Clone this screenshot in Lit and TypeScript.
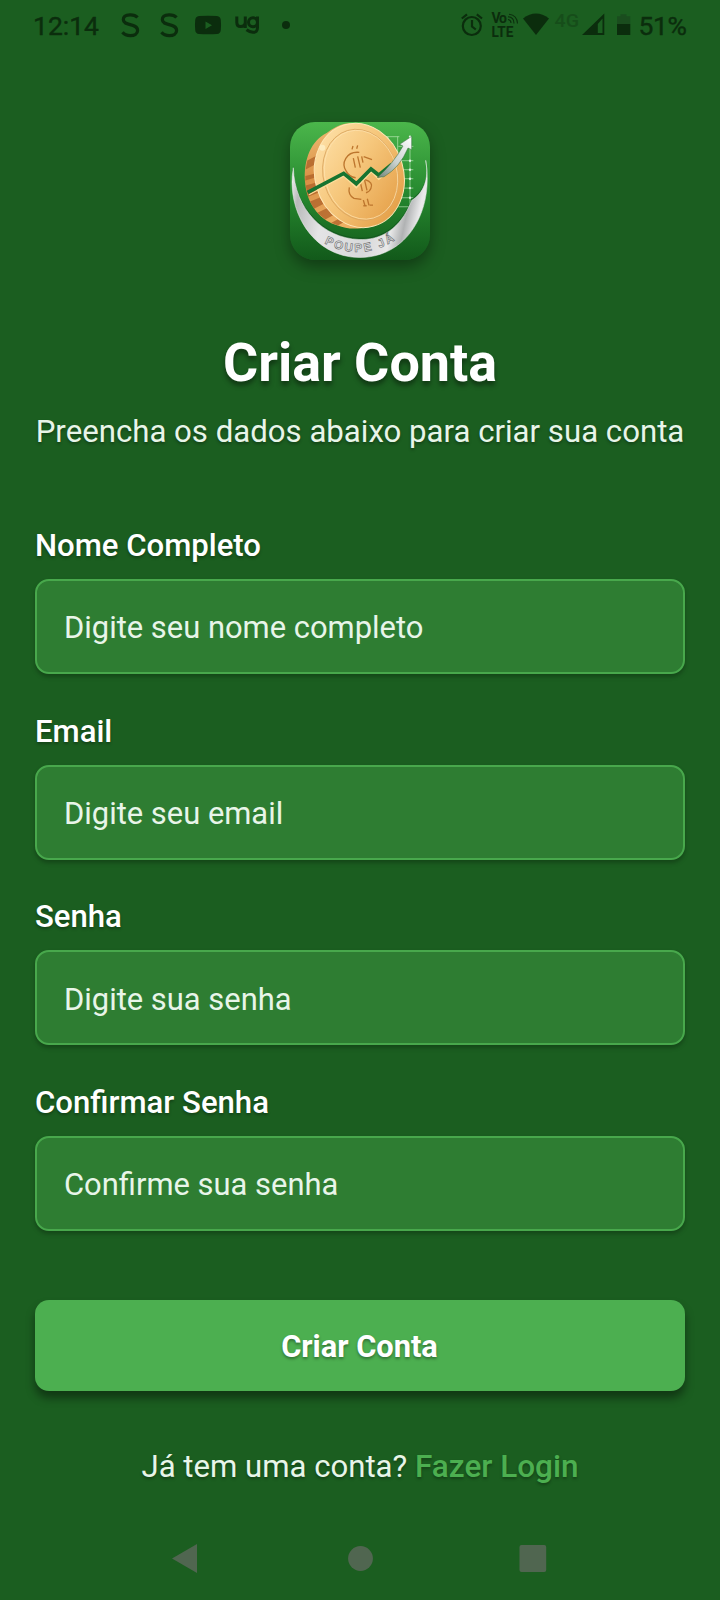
import { LitElement, html, css, svg } from "lit";
import { customElement } from "lit/decorators.js";

@customElement("status-bar")
class StatusBar extends LitElement {
  static styles = css`
    :host { display: block; height: 50px; }
    svg { display: block; }
    text { font-family: Roboto, sans-serif; fill: #0b2d0d; }
    .clock { font-size: 26.5px; stroke: #0b2d0d; stroke-width: 0.4px; }
    .volte { font-weight: 700; font-size: 14px; }
    .net { font-weight: 500; font-size: 18px; fill: #164d1a; }
  `;
  render() {
    return html`<svg width="720" height="50" viewBox="0 0 720 50" fill="#0b2d0d">
      <text class="clock" x="33" y="34.7" textLength="66">12:14</text>
      <g fill="none" stroke="#0b2d0d" stroke-width="3.2">
        <path d="M137.500 17.500C135.500 15.300 133 14.700 130 14.800C125.800 14.900 123.300 16.800 123.300 19.600C123.300 26.500 137.600 22.800 137.600 30.500C137.600 34 134.400 35.700 130.400 35.700C127 35.700 124.300 34.600 122.500 32.300"/>
        <path d="M176.500 17.500C174.500 15.300 172 14.700 169 14.800C164.800 14.900 162.300 16.800 162.300 19.600C162.300 26.500 176.600 22.800 176.600 30.500C176.600 34 173.400 35.700 169.400 35.700C166 35.700 163.300 34.600 161.500 32.300"/>
      </g>
      <path fill-rule="evenodd" d="M199 16Q208 15.300 217 16Q220.500 16.400 220.800 20Q221.300 25 220.800 30Q220.500 33.700 217 34Q208 34.700 199 34Q195.500 33.700 195.200 30Q194.700 25 195.200 20Q195.500 16.400 199 16ZM205.500 21.500V29L212 25.200Z"/>
      <g fill="none" stroke="#0b2d0d" stroke-width="3">
        <path d="M236.800 16.500V22.500Q236.800 26.500 240.600 26.500Q245.300 26.500 245.300 22V16.500V28"/>
        <circle cx="253" cy="22.300" r="4.500"/>
        <path d="M257.500 16.500V27.500Q257.500 32.500 253 32.300Q249.500 32 246.500 29.800"/>
      </g>
      <circle cx="286" cy="25" r="4"/>
      <g fill="none" stroke="#0b2d0d" stroke-width="2.200">
        <circle cx="471.800" cy="26" r="9"/>
        <path d="M472 20V26.500L475.800 29.500M461.800 18.500L467 14.400M482 18.500L476.800 14.400"/>
      </g>
      <text class="volte" x="491.500" y="22.500" textLength="15.500">Vo</text>
      <text class="volte" x="491.500" y="36.700" textLength="22" lengthAdjust="spacingAndGlyphs">LTE</text>
      <path fill="none" stroke="#0b2d0d" stroke-width="1.100" d="M508 19.500Q511 20 511 23M508 16.800Q514 17 514 23.500M509 14.200Q517 15 517.500 23.500"/>
      <path d="M523 18.500Q536 8.500 549 18.500L536 35Z"/>
      <text class="net" x="554.500" y="26.500" textLength="24.500" lengthAdjust="spacingAndGlyphs">4G</text>
      <path fill-rule="evenodd" d="M582 35L604.300 13.500V35ZM597.800 24V33H602.500V18.500Z"/>
      <path d="M617 17V16.300H620.500V14.300H626.500V16.300H630.300V24H617Z" fill="#1a4d1e"/>
      <path d="M617 24H630.300V35H617Z"/>
      <text class="clock" x="638.500" y="34.700" textLength="48.500">51%</text>
    </svg>`;
  }
}

@customElement("app-logo")
class AppLogo extends LitElement {
  static styles = css`
    :host { display: block; width: 140px; height: 138.500px; border-radius: 25px; overflow: hidden;
      box-shadow: 0 7px 15px rgba(0, 0, 0, 0.36); }
    svg { display: block; }
    text { font-family: "Liberation Sans", sans-serif; font-weight: 700; font-size: 35px; letter-spacing: 6.500px; }
  `;
  render() {
    const gridX = [354, 383, 420];
    const gridY = [94, 123, 166, 193, 220, 248, 277, 304];
    return html`<svg width="140" height="138.500" viewBox="60 50 420 415" preserveAspectRatio="none">
      <defs>
        <linearGradient id="bg" x1="0" y1="0" x2="0" y2="1"><stop offset="0" stop-color="#4bb64b"/><stop offset=".5" stop-color="#278a30"/><stop offset="1" stop-color="#12591a"/></linearGradient>
        <linearGradient id="face" x1=".1" y1="0" x2=".85" y2="1"><stop offset="0" stop-color="#ffe3ac"/><stop offset=".45" stop-color="#f6c77c"/><stop offset="1" stop-color="#e39b42"/></linearGradient>
        <linearGradient id="edge" x1="0" y1="0" x2=".3" y2="1"><stop offset="0" stop-color="#f2c27a"/><stop offset=".5" stop-color="#d98f45"/><stop offset="1" stop-color="#eeb063"/></linearGradient>
        <linearGradient id="silver" x1="0" y1="0" x2="1" y2=".15"><stop offset="0" stop-color="#fff"/><stop offset=".1" stop-color="#b9babb"/><stop offset=".3" stop-color="#e4e4e5"/><stop offset=".65" stop-color="#d8d9da"/><stop offset=".82" stop-color="#e8e8e8"/><stop offset=".91" stop-color="#b0b2b3"/><stop offset="1" stop-color="#e9e9ea"/></linearGradient>
        <linearGradient id="arrow" x1="0" y1="1" x2="1" y2="0"><stop offset="0" stop-color="#6f8378"/><stop offset=".45" stop-color="#c9d1ce"/><stop offset="1" stop-color="#fff"/></linearGradient>
        <path id="arc" d="M163 413Q280 477 402 386"/>
      </defs>
      <rect x="60" y="50" width="420" height="415" fill="url(#bg)"/>
      <g stroke="#d2f3cc" stroke-width="2" opacity=".85">
        ${gridX.map(x => svg`<path d="M${x} 94V${x === 420 ? 304 : 150}"/>`)}
        ${gridY.map(y => svg`<path d="M${y < 110 ? 348 : 385} ${y}H${y < 110 ? 388 : 430}"/><circle cx="420" cy=${y} r="3.500" fill="#fff" stroke="none"/>`)}
      </g>
      <path d="M239 54C210 54 190 70 170 83C125 105 100 160 105 230C111 304 157 348 203 360Q234 373 274 368L360 318Z" fill="url(#edge)"/>
      <path d="M112 165L142 150L138 176L107 192ZM106 212L136 204V216L106 225ZM107 240L136 232L144 262L114 274ZM120 288L150 276L160 296L132 310ZM142 322L172 308L196 326L166 342ZM184 352L214 336L230 345L204 360Z" fill="#b0642a" opacity=".8"/>
      <ellipse cx="268" cy="210" rx="133" ry="158" transform="rotate(-16 268 210)" fill="url(#face)" stroke="#ffe7b6" stroke-width="3"/>
      <ellipse cx="271" cy="208" rx="111" ry="138" transform="rotate(-16 271 208)" fill="none" stroke="#dba660" stroke-width="2.500"/>
      <ellipse cx="273" cy="208" rx="108" ry="135" transform="rotate(-16 273 208)" fill="none" stroke="#ffe3b0" stroke-width="2"/>
      <g fill="none" stroke="#bd762e" stroke-width="4">
        <path d="M268 141C229 137 212 174 229 198Q237 214 257 217M281 154L306 163M238 246Q233 268 252 279L274 282M285 223Q311 231 303 248Q300 258 288 262"/>
        <path d="M246 132L249 122M260 130L263 120M250 158L256 187M263 153L271 187M275 153L279 172M270 226L277 257M283 221L291 255M280 284L285 301M292 280L297 300M280 301L290 301M299 299L309 299"/>
      </g>
      <path d="M117 260L221 204L259 239L304 191L326 214L365 184" fill="none" stroke="#fbdc9a" stroke-width="4" transform="translate(0 8)"/>
      <path d="M113 261L221 204L259 235L303 191L326 209L365 177" fill="none" stroke="#167430" stroke-width="11"/>
      <path d="M322 216Q371 173 399 122L389 117L425 93V133L414 128Q390 186 342 214Z" fill="url(#arrow)" stroke="#306c3b" stroke-width="1.500"/>
      <path d="M70 187C47 310 125 456 269 456C410 456 493 318 467 165C478 220 461 263 425 285C391 374 328 405 267 402C160 398 74 312 70 187Z" fill="#0b461a" opacity=".5" transform="translate(0 -5)"/>
      <path d="M70 187C47 310 125 456 269 456C410 456 493 318 467 165C478 220 461 263 425 285C391 374 328 405 267 402C160 398 74 312 70 187Z" fill="url(#silver)" stroke="#f2f2f2" stroke-width="1.500"/>
      <text fill="#e7e7e8" stroke="#6c6e6f" stroke-width="1.800"><textPath href="#arc">POUPE JÁ</textPath></text>
      <circle cx="157" cy="127" r="9" fill="#fff4cf" opacity=".65"/>
    </svg>`;
  }
}

@customElement("app-root")
class AppRoot extends LitElement {
  static styles = css`
    :host { display: flex; flex-direction: column; box-sizing: border-box; width: 720px; height: 1600px; overflow: hidden;
      background: #1b5e20; color: #fff; font-family: Roboto, sans-serif; font-size: 30.700px; }
    .content { display: flex; flex-direction: column; padding: 71.500px 35px 0; }
    app-logo { align-self: center; }
    h1 { margin: 71px 0 0; font-size: 53.900px; line-height: 64px; font-weight: 700; text-align: center; white-space: nowrap;
      text-shadow: 0 3.500px 5px rgba(0, 0, 0, 0.42); }
    .sub { margin: 19px -10px 0; line-height: 36px; text-align: center; white-space: nowrap; color: #e8f5e9; font-size: 31.180px;
      text-shadow: 0 2px 3px rgba(0, 0, 0, 0.3); }
    .form { display: flex; flex-direction: column; gap: 39.400px; margin-top: 78px; }
    .field { display: flex; flex-direction: column; gap: 15px; height: 146.200px; box-sizing: border-box; }
    .label { line-height: 36px; flex: none; font-weight: 500; text-shadow: 0 2px 3px rgba(0, 0, 0, 0.3); height: 36px; font-size: 31.120px; }
    .input { flex: 1; display: flex; align-items: center; box-sizing: border-box; border: 2px solid #48a84c;
      border-radius: 14px; background: #2e7d32; padding: 2.500px 27px 0; color: #e8f5e9; font-size: 30.920px;
      box-shadow: 0 3px 4px rgba(0, 0, 0, 0.26); }
    .button { display: flex; align-items: center; justify-content: center; height: 91px; margin-top: 68.800px;
      border-radius: 14px; background: #4caf50; font-weight: 700; padding: 2px 1px 0 0; box-sizing: border-box; font-size: 30.800px;
      box-shadow: 0 7px 10px rgba(0, 0, 0, 0.42); text-shadow: 0 2px 3px rgba(0, 0, 0, 0.35); }
    .login { margin-top: 58px; line-height: 36px; text-align: center; white-space: nowrap; color: #e8f5e9; font-size: 31.150px;
      text-shadow: 0 2px 3px rgba(0, 0, 0, 0.3); }
    .link { font-weight: 500; font-size: 31.500px; color: #4caf50; }
    .nav { margin-top: auto; height: 84px; flex: none; }
    .nav svg { display: block; }
  `;
  fields = [
    ["Nome Completo", "Digite seu nome completo"],
    ["Email", "Digite seu email"],
    ["Senha", "Digite sua senha"],
    ["Confirmar Senha", "Confirme sua senha"],
  ];
  render() {
    return html`
      <status-bar></status-bar>
      <div class="content">
        <app-logo></app-logo>
        <h1>Criar Conta</h1>
        <p class="sub">Preencha os dados abaixo para criar sua conta</p>
        <div class="form">
          ${this.fields.map(([label, hint]) => html`<div class="field"><div class="label">${label}</div><div class="input">${hint}</div></div>`)}
        </div>
        <div class="button">Criar Conta</div>
        <div class="login">Já tem uma conta? <span class="link">Fazer Login</span></div>
      </div>
      <div class="nav">
        <svg width="720" height="84" viewBox="0 1516 720 84" fill="#506650">
          <path d="M172 1558.500L197 1544V1573Z"/>
          <circle cx="360.500" cy="1558.500" r="12.400"/>
          <rect x="519.500" y="1545" width="26.700" height="27" rx="2"/>
        </svg>
      </div>`;
  }
}
